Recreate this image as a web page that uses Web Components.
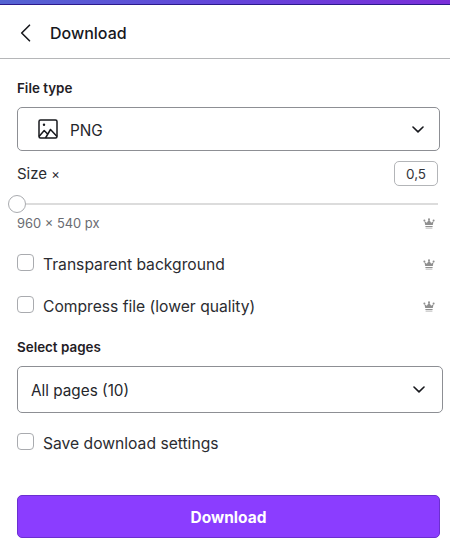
<!DOCTYPE html>
<html lang="en">
<head>
<meta charset="utf-8">
<title>Download</title>
<style>
  html, body { margin: 0; height: 552px; overflow: hidden; background: #fff; }
  body { font-family: Inter, "Liberation Sans", sans-serif; color: #1a1b22; }
</style>
</head>
<body>
<download-panel></download-panel>

<script>
const crown = `<svg width="12" height="11" viewBox="0 0 12 11"><g fill="#8f8f8f"><circle cx="1.4" cy="2.6" r="1"/><circle cx="6" cy="1.2" r="1"/><circle cx="10.6" cy="2.6" r="1"/><path d="M1.4 3l2.4 1.7L6 1.6l2.2 3.1L10.6 3l-.8 4H2.2z"/><path d="M2.4 8h7.2v1H2.4z"/></g><path fill="#b5b5b5" d="M2.6 9.6h6.8v1H2.6z"/></svg>`;

const droptpl = document.createElement('template');
droptpl.innerHTML = `
  <style>
    :host { display: block; box-sizing: border-box; }
    #box {
      display: flex; align-items: center; height: 100%; box-sizing: border-box;
      border: 1px solid #8d8f94; border-radius: 5px; background: #fff;
      font-size: 15.3px; color: #25262b;
    }
    #text { flex: 1; padding-top: 2px; }
    svg { display: block; }
  </style>
  <div id="box">
    <slot name="icon"></slot>
    <span id="text"><slot></slot></span>
    <svg width="12" height="7" viewBox="0 0 12 7" fill="none"><path d="M1 1l5 4.8L11 1" stroke="#17181d" stroke-width="1.6" stroke-linecap="round" stroke-linejoin="round"/></svg>
  </div>`;

class ui_dropdown extends HTMLElement {
  constructor() {
    super();
    this.attachShadow({mode: 'open'});
    this.shadowRoot.appendChild(droptpl.content.cloneNode(true));
  }
  connectedCallback() {
    const box = this.shadowRoot.querySelector('#box');
    box.style.paddingLeft = this.getAttribute('pad-left') + 'px';
    box.style.paddingRight = this.getAttribute('pad-right') + 'px';
  }
}
customElements.define('ui-dropdown', ui_dropdown);

const checktpl = document.createElement('template');
checktpl.innerHTML = `
  <style>
    :host { display: flex; align-items: center; height: 18px; font-size: 15.65px; color: #2b2c31; }
    #box {
      width: 17px; height: 17px; box-sizing: border-box; margin: 0 9px 4px 0;
      border: 1px solid #a9abaf; border-radius: 4px; background: #fff;
    }
    #label { flex: 1; }
    #crown { width: 12px; margin-right: 5px; display: flex; }
  </style>
  <span id="box"></span>
  <span id="label"><slot></slot></span>
  <span id="crown"></span>`;

class ui_check extends HTMLElement {
  constructor() {
    super();
    this.attachShadow({mode: 'open'});
    this.shadowRoot.appendChild(checktpl.content.cloneNode(true));
  }
  connectedCallback() {
    if (this.hasAttribute('pro')) this.shadowRoot.querySelector('#crown').innerHTML = crown;
  }
}
customElements.define('ui-check', ui_check);

const slidertpl = document.createElement('template');
slidertpl.innerHTML = `
  <style>
    :host { display: flex; align-items: center; height: 18px; padding-left: 8px; padding-right: 2px; }
    #thumb {
      width: 18px; height: 18px; box-sizing: border-box; flex: none;
      border: 1px solid #a9abaf; border-radius: 50%; background: #fff;
    }
    #track { flex: 1; height: 2px; background: #dcdcdc; }
  </style>
  <span id="thumb"></span>
  <span id="track"></span>`;

class ui_slider extends HTMLElement {
  constructor() {
    super();
    this.attachShadow({mode: 'open'});
    this.shadowRoot.appendChild(slidertpl.content.cloneNode(true));
  }
}
customElements.define('ui-slider', ui_slider);

const paneltpl = document.createElement('template');
paneltpl.innerHTML = `
  <style>
    :host { display: block; width: 450px; height: 552px; background: #fff; }
    #bar { height: 5px; box-sizing: border-box; background: linear-gradient(90deg, #5464d2 0%, #6345da 50%, #7b2fd9 100%); border-bottom: 1px solid #2c1a8c; }
    #sheet { height: 547px; background: #fff; box-sizing: border-box; }
    header {
      display: flex; align-items: center; height: 54px; box-sizing: border-box;
      border-bottom: 1px solid #b5b6b8; padding: 3px 0 0 20px; font-size: 16px; font-weight: 500; color: #17181d;
    }
    header svg { display: block; margin-right: 19px; margin-top: -1px; }
    main { padding: 0 10px 0 17px; }
    h2 { margin: 0; font-size: 13.4px; font-weight: 600; line-height: 18px; color: #1f2025; }
    .file-label { margin-top: 20px; }
    .file { height: 44px; margin-top: 10px; }
    .size { display: flex; align-items: center; height: 25px; margin-top: 10px; margin-right: 2px; font-size: 15px; color: #2b2c31; justify-content: space-between; }
    .size i { font-style: normal; font-size: 13px; }
    .value {
      width: 44px; height: 25px; box-sizing: border-box; display: flex; align-items: center; justify-content: center;
      border: 1px solid #b3b5b8; border-radius: 5px; font-size: 13.5px; color: #33343a;
    }
    ui-slider { margin: 9px 0 0 -17px; }
    .dims { display: flex; justify-content: space-between; align-items: center; height: 18px; margin-top: 1px; padding-right: 5px; font-size: 12.9px; color: #6a6c72; }
    .dims svg { display: block; }
    .transparent { margin-top: 23px; }
    .compress { margin-top: 24px; }
    .pages-label { margin-top: 23px; }
    .pages { height: 47px; margin-top: 10px; margin-right: -3px; }
    .save { margin-top: 21px; }
    button {
      display: block; width: 423px; height: 43px; margin-top: 43px; padding: 1px 0 0;
      border: 1px solid #6b2fd0; border-radius: 5px; background: #8b3dff; color: #fff;
      font: 700 15.5px Inter, "Liberation Sans", sans-serif;
    }
  </style>
  <div id="bar"></div>
  <div id="sheet">
    <header>
      <svg width="11" height="18" viewBox="0 0 11 18" fill="none"><path d="M9.5 1.2L1.7 9l7.8 7.8" stroke="#17181d" stroke-width="1.6" stroke-linecap="round" stroke-linejoin="round"/></svg>
      <span>Download</span>
    </header>
    <main>
      <h2 class="file-label">File type</h2>
      <ui-dropdown class="file" pad-left="20" pad-right="15">
        <svg slot="icon" width="20" height="20" viewBox="0 0 20 20" fill="none" stroke="#17181d" stroke-width="1.5" stroke-linejoin="round" style="display:block;margin-right:12px">
          <rect x="1" y="1" width="18" height="18" rx="1.5"/>
          <circle cx="6" cy="5.8" r="1.2" fill="#17181d" stroke="none"/>
          <path d="M1 17.5l5.2-6 3.6 3.7M7.5 19l5-8.5 6.5 7"/>
        </svg>
        PNG
      </ui-dropdown>
      <div class="size"><span>Size <i>×</i></span><span class="value">0,5</span></div>
      <ui-slider></ui-slider>
      <div class="dims"><span>960 × 540 px</span>${crown}</div>
      <ui-check class="transparent" pro>Transparent background</ui-check>
      <ui-check class="compress" pro>Compress file (lower quality)</ui-check>
      <h2 class="pages-label">Select pages</h2>
      <ui-dropdown class="pages" pad-left="13" pad-right="17">All pages (10)</ui-dropdown>
      <ui-check class="save">Save download settings</ui-check>
      <button type="button">Download</button>
    </main>
  </div>`;

class download_panel extends HTMLElement {
  constructor() {
    super();
    this.attachShadow({mode: 'open'});
    this.shadowRoot.appendChild(paneltpl.content.cloneNode(true));
  }
}
customElements.define('download-panel', download_panel);
</script>
</body>
</html>
